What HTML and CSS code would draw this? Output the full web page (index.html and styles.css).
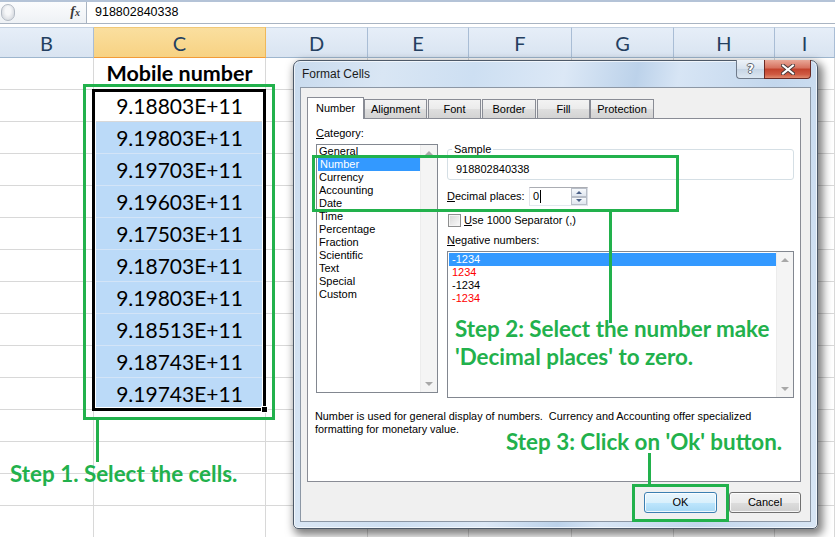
FILE: index.html
```html
<!DOCTYPE html>
<html>
<head>
<meta charset="utf-8">
<title>Format Cells</title>
<link rel="stylesheet" href="styles.css">
</head>
<body>
<div class="page">
  <div class="formula-bar">
    <div class="namebox"><span class="nb-pill"></span><span class="fx"><i>f</i><i class="fx-x">x</i></span></div>
    <div class="formula">918802840338</div>
  </div>

  <div class="sheet">
    <div class="ch">B</div><div class="ch ch-sel">C</div><div class="ch">D</div><div class="ch">E</div><div class="ch">F</div><div class="ch">G</div><div class="ch">H</div><div class="ch">I</div>

    <div class="c"></div><div class="c c-title">Mobile number</div><div class="c"></div><div class="c"></div><div class="c"></div><div class="c"></div><div class="c"></div><div class="c"></div>
    <div class="c"></div><div class="c c-num">9.18803E+11</div><div class="c"></div><div class="c"></div><div class="c"></div><div class="c"></div><div class="c"></div><div class="c"></div>
    <div class="c"></div><div class="c c-num c-sel">9.19803E+11</div><div class="c"></div><div class="c"></div><div class="c"></div><div class="c"></div><div class="c"></div><div class="c"></div>
    <div class="c"></div><div class="c c-num c-sel">9.19703E+11</div><div class="c"></div><div class="c"></div><div class="c"></div><div class="c"></div><div class="c"></div><div class="c"></div>
    <div class="c"></div><div class="c c-num c-sel">9.19603E+11</div><div class="c"></div><div class="c"></div><div class="c"></div><div class="c"></div><div class="c"></div><div class="c"></div>
    <div class="c"></div><div class="c c-num c-sel">9.17503E+11</div><div class="c"></div><div class="c"></div><div class="c"></div><div class="c"></div><div class="c"></div><div class="c"></div>
    <div class="c"></div><div class="c c-num c-sel">9.18703E+11</div><div class="c"></div><div class="c"></div><div class="c"></div><div class="c"></div><div class="c"></div><div class="c"></div>
    <div class="c"></div><div class="c c-num c-sel">9.19803E+11</div><div class="c"></div><div class="c"></div><div class="c"></div><div class="c"></div><div class="c"></div><div class="c"></div>
    <div class="c"></div><div class="c c-num c-sel">9.18513E+11</div><div class="c"></div><div class="c"></div><div class="c"></div><div class="c"></div><div class="c"></div><div class="c"></div>
    <div class="c"></div><div class="c c-num c-sel">9.18743E+11</div><div class="c"></div><div class="c"></div><div class="c"></div><div class="c"></div><div class="c"></div><div class="c"></div>
    <div class="c"></div><div class="c c-num c-sel">9.19743E+11</div><div class="c"></div><div class="c"></div><div class="c"></div><div class="c"></div><div class="c"></div><div class="c"></div>
    <div class="c"></div><div class="c"></div><div class="c"></div><div class="c"></div><div class="c"></div><div class="c"></div><div class="c"></div><div class="c"></div>
    <div class="c"></div><div class="c"></div><div class="c"></div><div class="c"></div><div class="c"></div><div class="c"></div><div class="c"></div><div class="c"></div>
    <div class="c"></div><div class="c"></div><div class="c"></div><div class="c"></div><div class="c"></div><div class="c"></div><div class="c"></div><div class="c"></div>
    <div class="c"></div><div class="c"></div><div class="c"></div><div class="c"></div><div class="c"></div><div class="c"></div><div class="c"></div><div class="c"></div>
  </div>

  <div class="selbox"><span class="fill-handle"></span></div>

  <div class="dialog">
    <div class="titlebar">
      <span class="title">Format Cells</span>
      <div class="capbtns">
        <span class="cap-help">?</span>
        <span class="cap-close"><svg width="14" height="11" viewBox="0 0 14 11"><path d="M2 1.5 L12 9.5 M12 1.5 L2 9.5" stroke="#4a3a3a" stroke-width="4" stroke-linecap="square"/><path d="M2 1.5 L12 9.5 M12 1.5 L2 9.5" stroke="#ffffff" stroke-width="2" stroke-linecap="square"/></svg></span>
      </div>
    </div>
    <div class="panel">
      <div class="tabs">
        <span class="tab active w57">Number</span>
        <span class="tab w63">Alignment</span>
        <span class="tab w53 gap">Font</span>
        <span class="tab w54 gap">Border</span>
        <span class="tab w53 gap">Fill</span>
        <span class="tab w64">Protection</span>
      </div>
      <div class="tabpage">
        <div class="cols">
          <div class="leftcol">
            <div class="lbl"><u>C</u>ategory:</div>
            <div class="listbox cat">
              <div class="items">
                <div class="it">General</div>
                <div class="it on">Number</div>
                <div class="it">Currency</div>
                <div class="it">Accounting</div>
                <div class="it">Date</div>
                <div class="it">Time</div>
                <div class="it">Percentage</div>
                <div class="it">Fraction</div>
                <div class="it">Scientific</div>
                <div class="it">Text</div>
                <div class="it">Special</div>
                <div class="it">Custom</div>
              </div>
              <div class="vscroll"><span class="arr-up"></span><span class="arr-down"></span></div>
            </div>
          </div>
          <div class="rightcol">
            <fieldset class="sample">
              <legend>Sample</legend>
              <div class="sample-val">918802840338</div>
            </fieldset>
            <div class="decrow">
              <span class="declbl"><u>D</u>ecimal places:</span>
              <div class="spin">
                <span class="spin-val">0<span class="caret"></span></span>
                <span class="spin-btns"><span class="sb sb-up"></span><span class="sb sb-down"></span></span>
              </div>
            </div>
            <div class="chkrow"><span class="chk"></span><span><u>U</u>se 1000 Separator (,)</span></div>
            <div class="lbl neglbl"><u>N</u>egative numbers:</div>
            <div class="listbox neg">
              <div class="items">
                <div class="nit on">-1234</div>
                <div class="nit red">1234</div>
                <div class="nit">-1234</div>
                <div class="nit red">-1234</div>
              </div>
              <div class="vscroll"><span class="arr-up"></span><span class="arr-down"></span></div>
            </div>
          </div>
        </div>
        <p class="desc">Number is used for general display of numbers.&nbsp; Currency and Accounting offer specialized<br>formatting for monetary value.</p>
      </div>
      <div class="buttons">
        <span class="btn ok">OK</span>
        <span class="btn cancel">Cancel</span>
      </div>
    </div>
  </div>

  <div class="ann-box a-cells"></div>
  <div class="ann-line l-cells"></div>
  <div class="step s1">Step 1. Select the cells.</div>

  <div class="ann-box a-number"></div>
  <div class="ann-line l-number"></div>
  <div class="step s2">Step 2: Select the number make<br>'Decimal places' to zero.</div>

  <div class="step s3">Step 3: Click on 'Ok' button.</div>
  <div class="ann-line l-ok"></div>
  <div class="ann-box a-ok"></div>
</div>
</body>
</html>
```

FILE: styles.css
```css
html, body {
  margin: 0;
  padding: 0;
  background: #ffffff;
}

.page {
  position: relative;
  width: 835px;
  height: 537px;
  overflow: hidden;
  font-family: "Liberation Sans", Arial, sans-serif;
  color: #000;
}

/* ---------- formula bar ---------- */
.formula-bar {
  display: flex;
  height: 24px;
  box-sizing: border-box;
  border-top: 2px solid #b4c3d7;
  border-bottom: 1px solid #a9b4c2;
  margin-bottom: 3px;
}

.namebox {
  width: 86px;
  flex: none;
  display: flex;
  align-items: center;
  background: linear-gradient(#fbfcfd, #eef1f5);
  border-right: 1px solid #a9b4c2;
}

.nb-pill {
  width: 14px;
  height: 17px;
  margin-left: 1px;
  box-sizing: border-box;
  border: 1px solid #b3bac4;
  border-radius: 9px;
  background: radial-gradient(ellipse at 50% 40%, #f6f7f9 30%, #dcdfe4 70%);
}

.fx {
  margin-left: auto;
  margin-right: 6px;
  font-family: "Liberation Serif", serif;
  font-weight: bold;
  font-size: 14px;
  color: #3a3a3a;
  line-height: 14px;
}

.fx-x {
  font-size: 10px;
}

.formula {
  flex: 1;
  background: #fff;
  padding-left: 8px;
  font-size: 12.5px;
  line-height: 21px;
}

/* ---------- sheet grid ---------- */
.sheet {
  display: grid;
  grid-template-columns: 94px 172px 102px 101px 103px 102px 101px 60px;
  grid-template-rows: 31px;
  grid-auto-rows: 32px;
}

.ch {
  box-sizing: border-box;
  border-top: 1px solid #c5d2e2;
  border-right: 1px solid #a9bdd5;
  border-bottom: 1px solid #9eb6ce;
  background: linear-gradient(#e6eef8, #d9e4f1);
  display: flex;
  align-items: center;
  justify-content: center;
  font-family: Lato, "Liberation Sans", sans-serif;
  font-size: 20px;
  color: #243f60;
}

.ch-sel {
  background: linear-gradient(#fadf9f, #f7d283);
  border-right-color: #efb85a;
  border-bottom-color: #f29b38;
  border-top-color: #f1c877;
}

.c {
  box-sizing: border-box;
  border-right: 1px solid #d8d8d8;
  border-bottom: 1px solid #d8d8d8;
  display: flex;
  align-items: center;
  justify-content: center;
  font-family: Lato, "Liberation Sans", sans-serif;
}

.c-title {
  font-weight: 700;
  font-size: 21.5px;
  padding-bottom: 2px;
}

.c-num {
  font-size: 21px;
}

.c-sel {
  background: #bbdaf8;
  border-bottom-color: #d3e4f7;
}

.selbox {
  position: absolute;
  left: 92px;
  top: 89px;
  width: 174px;
  height: 322px;
  box-sizing: border-box;
  border: 3px solid #000;
  box-shadow: inset 0 0 0 1px #fff;
}

.fill-handle {
  position: absolute;
  right: -5px;
  bottom: -5px;
  width: 5px;
  height: 5px;
  background: #000;
  border: 1px solid #fff;
}

/* ---------- dialog ---------- */
.dialog {
  position: absolute;
  left: 293px;
  top: 60px;
  width: 525px;
  height: 469px;
  box-sizing: border-box;
  border: 1px solid #4d5968;
  border-radius: 7px 7px 5px 5px;
  padding: 0 6px 6px;
  background: linear-gradient(100deg, #c9dbee 0%, #d9e6f4 15%, #cddff2 30%, #dce8f6 45%, #bcd2ea 57%, #d7e5f5 64%, #c3d7ed 80%, #d8e6f5 100%);
  box-shadow: 3px 4px 9px 2px rgba(0, 0, 0, 0.5), inset 0 0 0 1px rgba(255, 255, 255, 0.65);
  display: flex;
  flex-direction: column;
}

.titlebar {
  height: 26px;
  flex: none;
  display: flex;
  align-items: flex-start;
}

.title {
  padding-left: 2px;
  line-height: 26px;
  font-size: 12px;
  color: #1b1b1b;
}

.capbtns {
  margin-left: auto;
  margin-top: -1px;
  display: flex;
}

.cap-help {
  width: 28px;
  height: 19px;
  box-sizing: border-box;
  border: 1px solid #6f7b8b;
  border-top: none;
  border-right: none;
  border-radius: 0 0 0 4px;
  background: linear-gradient(#eef3f9, #d7e2ee 50%, #c6d5e5 51%, #dce7f2);
  display: flex;
  align-items: center;
  justify-content: center;
  font-family: "DejaVu Sans", sans-serif;
  font-weight: bold;
  font-size: 12px;
  color: #ffffff;
  text-shadow: -1px 0 #5d6670, 1px 0 #5d6670, 0 -1px #5d6670, 0 1px #5d6670;
}

.cap-close {
  width: 47px;
  height: 19px;
  box-sizing: border-box;
  border: 1px solid #6b2a24;
  border-top: none;
  border-radius: 0 0 4px 0;
  background: linear-gradient(#e9a898, #d6705d 45%, #c2422c 50%, #cf5a42 80%, #e08a6e);
  display: flex;
  align-items: center;
  justify-content: center;
}

.panel {
  flex: none;
  height: 435px;
  box-sizing: border-box;
  border: 1px solid #8c97a5;
  background: #f0f0f0;
  padding: 8px 9px 0 6px;
  font-size: 11px;
  line-height: 13px;
}

.tabs {
  display: flex;
  align-items: flex-end;
  height: 22px;
}

.tab {
  height: 19px;
  box-sizing: border-box;
  border: 1px solid #898c95;
  border-bottom: none;
  background: linear-gradient(#f3f3f3, #ebebeb 50%, #dedede 51%, #d3d3d3);
  display: flex;
  align-items: center;
  justify-content: center;
}

.tab.active {
  height: 22px;
  background: #ffffff;
  margin-bottom: -1px;
  position: relative;
  z-index: 1;
}

.w57 { width: 57px; }
.w63 { width: 63px; }
.w53 { width: 53px; }
.w54 { width: 54px; }
.w64 { width: 64px; }
.gap { margin-left: 1px; }

.tabpage {
  height: 364px;
  box-sizing: border-box;
  border: 1px solid #898c95;
  background: #ffffff;
  padding: 8px 0 0 8px;
}

.cols {
  display: flex;
  gap: 9px;
}

.leftcol {
  width: 122px;
}

.lbl {
  height: 13px;
}

.listbox {
  box-sizing: border-box;
  border: 1px solid #828790;
  display: flex;
  background: #fff;
}

.cat {
  height: 249px;
  margin-top: 4px;
}

.items {
  flex: 1;
}

.it {
  height: 13px;
  padding-left: 2px;
}

.it.on {
  margin-left: 1px;
  padding-left: 2px;
  background: #3399ff;
  color: #fff;
}

.vscroll {
  width: 17px;
  flex: none;
  box-sizing: border-box;
  background: #f4f4f4;
  border-left: 1px solid #ececec;
  display: flex;
  flex-direction: column;
  justify-content: space-between;
  align-items: center;
  padding: 6px 0 6px;
}

.arr-up {
  width: 0;
  height: 0;
  border-left: 4px solid transparent;
  border-right: 4px solid transparent;
  border-bottom: 4px solid #a8a8a8;
}

.arr-down {
  width: 0;
  height: 0;
  border-left: 4px solid transparent;
  border-right: 4px solid transparent;
  border-top: 4px solid #a8a8a8;
}

.rightcol {
  width: 347px;
  padding-top: 16px;
}

.sample {
  margin: 0;
  min-width: 0;
  border: 1px solid #d5dfe5;
  border-radius: 3px;
  padding: 7px 4px 3px;
}

.sample legend {
  padding: 0 2px;
  line-height: 13px;
}

.sample-val {
  padding-left: 4px;
  line-height: 13px;
}

.decrow {
  display: flex;
  align-items: center;
  margin-top: 7px;
  height: 19px;
}

.declbl {
  width: 82px;
}

.spin {
  width: 59px;
  height: 19px;
  box-sizing: border-box;
  border: 1px solid;
  border-color: #abadb3 #dbdfe6 #e3e9ef #e2e3ea;
  display: flex;
  background: #fff;
}

.spin-val {
  flex: 1;
  padding-left: 3px;
  display: flex;
  align-items: center;
}

.caret {
  width: 1px;
  height: 13px;
  background: #000;
  margin-left: 1px;
}

.spin-btns {
  width: 16px;
  display: flex;
  flex-direction: column;
}

.sb {
  flex: 1;
  box-sizing: border-box;
  border: 1px solid #b8bec8;
  background: linear-gradient(#f7f9fc, #dfe6ef);
  display: flex;
  align-items: center;
  justify-content: center;
}

.sb-up::after {
  content: "";
  border-left: 3px solid transparent;
  border-right: 3px solid transparent;
  border-bottom: 3px solid #4b6087;
}

.sb-down::after {
  content: "";
  border-left: 3px solid transparent;
  border-right: 3px solid transparent;
  border-top: 3px solid #4b6087;
}

.chkrow {
  display: flex;
  align-items: center;
  margin-top: 8px;
  height: 13px;
}

.chk {
  width: 13px;
  height: 13px;
  box-sizing: border-box;
  border: 1px solid #8e8f8f;
  background: linear-gradient(135deg, #d6d6d6, #fafafa);
  box-shadow: inset 0 0 0 1px #f4f4f4;
  margin-left: 1px;
  margin-right: 3px;
}

.neglbl {
  margin-top: 7px;
}

.neg {
  height: 147px;
  margin-top: 4px;
}

.nit {
  height: 13px;
  padding-left: 4px;
}

.nit.on {
  margin-top: 1px;
  margin-left: 1px;
  padding-left: 3px;
  background: #3399ff;
  color: #fff;
}

.nit.red {
  color: #ff0000;
}

.desc {
  margin: 12px 0 0 -1px;
  line-height: 13px;
  font-size: 10.85px;
}

.buttons {
  display: flex;
  justify-content: flex-end;
  gap: 12px;
  margin-top: 10px;
}

.btn {
  height: 21px;
  box-sizing: border-box;
  border: 1px solid #707070;
  border-radius: 3px;
  display: flex;
  align-items: center;
  justify-content: center;
  background: linear-gradient(#f2f2f2, #ebebeb 50%, #dddddd 51%, #cfcfcf);
  box-shadow: inset 0 0 0 1px rgba(255, 255, 255, 0.8);
}

.btn.ok {
  width: 73px;
  border-color: #3c7fb1;
  background: linear-gradient(#eaf6fd, #d9f0fc 50%, #bee6fd 51%, #a7d9f5);
}

.btn.cancel {
  width: 72px;
}

/* ---------- annotations ---------- */
.ann-box {
  position: absolute;
  box-sizing: border-box;
  border: 3px solid #22b14c;
}

.ann-line {
  position: absolute;
  width: 3px;
  background: #22b14c;
}

.step {
  position: absolute;
  font-family: Lato, "Liberation Sans", sans-serif;
  font-weight: 700;
  font-size: 22.4px;
  line-height: 25px;
  color: #22b14c;
  white-space: nowrap;
}

.a-cells { left: 83px; top: 84px; width: 192px; height: 336px; }
.l-cells { left: 96px; top: 419px; height: 43px; }
.s1 { left: 10px; top: 461px; }

.a-number { left: 312px; top: 155px; width: 367px; height: 57px; }
.l-number { left: 609px; top: 211px; height: 112px; }
.s2 { left: 455px; top: 315px; line-height: 28px; }

.s3 { left: 506px; top: 429px; }
.l-ok { left: 648px; top: 453px; height: 32px; }
.a-ok { left: 632px; top: 484px; width: 97px; height: 38px; }
```
